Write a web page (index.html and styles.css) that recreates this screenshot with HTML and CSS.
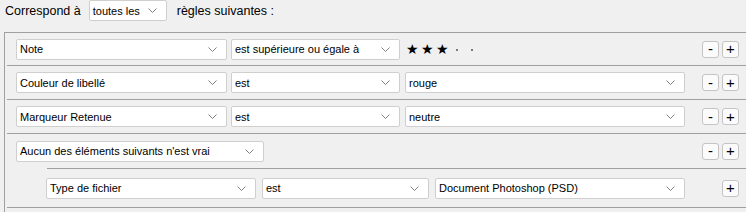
FILE: index.html
```html
<!DOCTYPE html>
<html lang="fr">
<head>
<meta charset="utf-8">
<link rel="stylesheet" href="styles.css">
</head>
<body>
<div class="header">
  <span class="label">Correspond à</span>
  <div class="select select-match"><span>toutes les</span><svg class="chev" width="9" height="5" viewBox="0 0 9 5"><polyline points="0.5,0.5 4.5,4.5 8.5,0.5" fill="none" stroke="#808080" stroke-width="1"/></svg></div>
  <span class="label">règles suivantes :</span>
</div>
<div class="box">
  <div class="row r1">
    <div class="select c1"><span>Note</span><svg class="chev" width="9" height="5" viewBox="0 0 9 5"><polyline points="0.5,0.5 4.5,4.5 8.5,0.5" fill="none" stroke="#808080" stroke-width="1"/></svg></div>
    <div class="select c2"><span>est supérieure ou égale à</span><svg class="chev" width="9" height="5" viewBox="0 0 9 5"><polyline points="0.5,0.5 4.5,4.5 8.5,0.5" fill="none" stroke="#808080" stroke-width="1"/></svg></div>
    <div class="stars c3"><span class="star">★</span><span class="star">★</span><span class="star">★</span><span class="dot"></span><span class="dot"></span></div>
    <div class="btns"><button class="btn">-</button><button class="btn">+</button></div>
  </div>
  <div class="row r2">
    <div class="select c1"><span>Couleur de libellé</span><svg class="chev" width="9" height="5" viewBox="0 0 9 5"><polyline points="0.5,0.5 4.5,4.5 8.5,0.5" fill="none" stroke="#808080" stroke-width="1"/></svg></div>
    <div class="select c2"><span>est</span><svg class="chev" width="9" height="5" viewBox="0 0 9 5"><polyline points="0.5,0.5 4.5,4.5 8.5,0.5" fill="none" stroke="#808080" stroke-width="1"/></svg></div>
    <div class="select c3"><span>rouge</span><svg class="chev" width="9" height="5" viewBox="0 0 9 5"><polyline points="0.5,0.5 4.5,4.5 8.5,0.5" fill="none" stroke="#808080" stroke-width="1"/></svg></div>
    <div class="btns"><button class="btn">-</button><button class="btn">+</button></div>
  </div>
  <div class="row r3">
    <div class="select c1"><span>Marqueur Retenue</span><svg class="chev" width="9" height="5" viewBox="0 0 9 5"><polyline points="0.5,0.5 4.5,4.5 8.5,0.5" fill="none" stroke="#808080" stroke-width="1"/></svg></div>
    <div class="select c2"><span>est</span><svg class="chev" width="9" height="5" viewBox="0 0 9 5"><polyline points="0.5,0.5 4.5,4.5 8.5,0.5" fill="none" stroke="#808080" stroke-width="1"/></svg></div>
    <div class="select c3"><span>neutre</span><svg class="chev" width="9" height="5" viewBox="0 0 9 5"><polyline points="0.5,0.5 4.5,4.5 8.5,0.5" fill="none" stroke="#808080" stroke-width="1"/></svg></div>
    <div class="btns"><button class="btn">-</button><button class="btn">+</button></div>
  </div>
  <div class="group">
    <div class="row r4">
      <div class="select cg"><span>Aucun des éléments suivants n'est vrai</span><svg class="chev" width="9" height="5" viewBox="0 0 9 5"><polyline points="0.5,0.5 4.5,4.5 8.5,0.5" fill="none" stroke="#808080" stroke-width="1"/></svg></div>
      <div class="btns"><button class="btn">-</button><button class="btn">+</button></div>
    </div>
    <div class="nested">
      <div class="row r5">
        <div class="select n1"><span>Type de fichier</span><svg class="chev" width="9" height="5" viewBox="0 0 9 5"><polyline points="0.5,0.5 4.5,4.5 8.5,0.5" fill="none" stroke="#808080" stroke-width="1"/></svg></div>
        <div class="select n2"><span>est</span><svg class="chev" width="9" height="5" viewBox="0 0 9 5"><polyline points="0.5,0.5 4.5,4.5 8.5,0.5" fill="none" stroke="#808080" stroke-width="1"/></svg></div>
        <div class="select n3"><span>Document Photoshop (PSD)</span><svg class="chev" width="9" height="5" viewBox="0 0 9 5"><polyline points="0.5,0.5 4.5,4.5 8.5,0.5" fill="none" stroke="#808080" stroke-width="1"/></svg></div>
        <div class="btns"><button class="btn">+</button></div>
      </div>
    </div>
  </div>
</div>
</body>
</html>
```
FILE: styles.css
```css
html, body {
  margin: 0;
  padding: 0;
  background: #f0f0f0;
  overflow: hidden;
}
body {
  width: 746px;
  height: 212px;
  font-family: "Liberation Sans", Arial, sans-serif;
  font-size: 11px;
  color: #000;
}
.header {
  display: flex;
  align-items: center;
  height: 21px;
  padding-left: 5px;
  margin-bottom: 11px;
}
.header .label {
  font-size: 12.5px;
}
.select-match {
  width: 78px;
  margin: 0 10px 0 8px;
}
.select {
  box-sizing: border-box;
  height: 21px;
  background: #fff;
  border: 1px solid #cfcfcf;
  border-radius: 2px;
  display: flex;
  align-items: center;
  justify-content: space-between;
  padding: 0 9px 0 3px;
  white-space: nowrap;
  overflow: hidden;
}
.chev {
  flex: none;
}
.box {
  margin-left: 4px;
  border-left: 1px solid #a0a0a0;
  border-top: 1px solid #a0a0a0;
  height: 180px;
}
.row {
  display: flex;
  align-items: center;
  padding: 0 7px 0 9px;
  margin-left: 2px;
  border-bottom: 1px solid #a0a0a0;
}
.r1 { height: 32px; }
.r2 { height: 33px; }
.r3 { height: 33px; }
.r4 { height: 34px; border-bottom: none; }
.c1 { width: 211px; margin-right: 4px; }
.c2 { width: 169px; margin-right: 5px; }
.c3 { width: 280px; }
.cg { width: 248px; }
.stars {
  display: flex;
  align-items: center;
  height: 21px;
  padding-left: 1px;
  font-family: "DejaVu Sans", sans-serif;
}
.star {
  width: 15px;
  font-size: 14px;
  line-height: 1;
}
.dot {
  width: 2px;
  height: 2px;
  border-radius: 1px;
  background: #555;
  margin: 1px 13px 0 5px;
}
.dot + .dot {
  margin-left: 0;
}
.btns {
  margin-left: auto;
  display: flex;
  gap: 3px;
}
.btn {
  box-sizing: border-box;
  width: 17px;
  height: 17px;
  padding: 0;
  background: #fbfbfb;
  border: 1px solid #c4c4c4;
  border-radius: 3px;
  font-family: "Liberation Sans", sans-serif;
  font-size: 15px;
  line-height: 14px;
  color: #000;
  text-align: center;
}
.group {
  border-bottom: 1px solid #a0a0a0;
  margin-left: 2px;
}
.group .row {
  margin-left: 0;
}
.nested {
  margin-left: 40px;
  border-top: 1px solid #a0a0a0;
}
.nested .row {
  border-bottom: none;
  height: 38px;
  padding-left: 0;
  margin-left: -1px;
}
.n1 { width: 210px; margin-right: 6px; }
.n2 { width: 167px; margin-right: 6px; }
.n3 { width: 250px; }
```
